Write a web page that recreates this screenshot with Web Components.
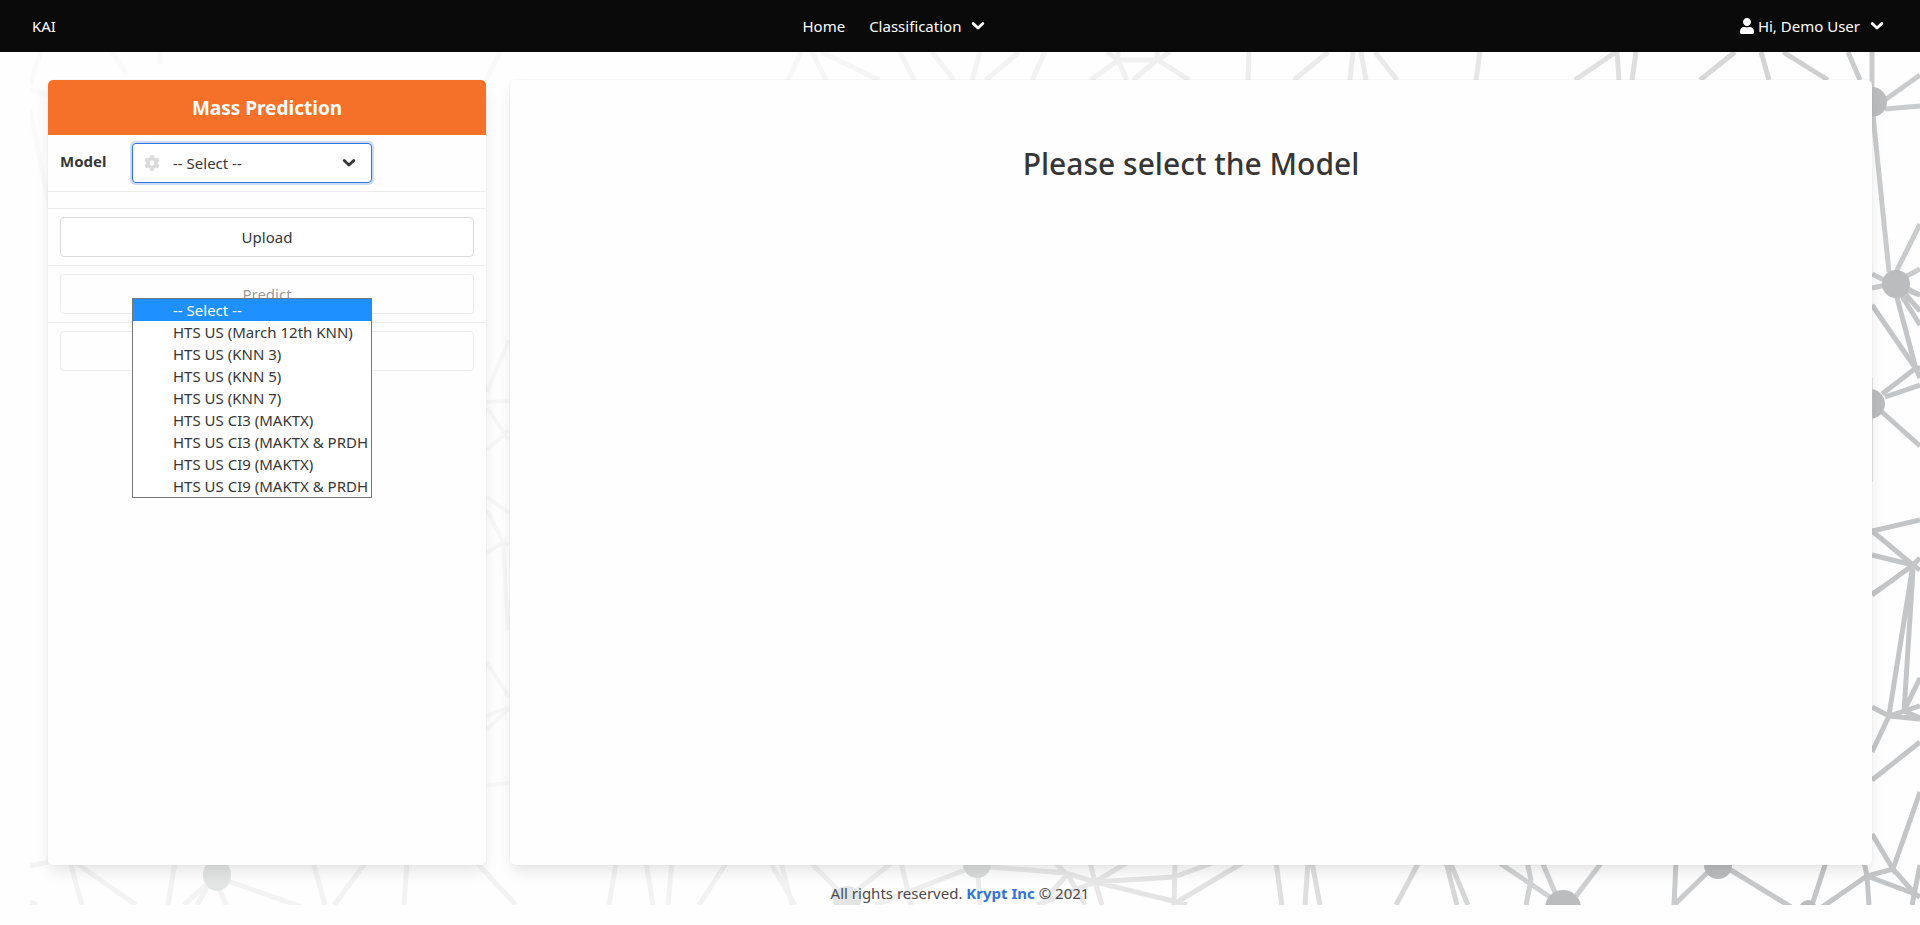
<!DOCTYPE html>
<html lang="en">
<head>
<meta charset="utf-8">
<meta name="viewport" content="width=device-width, initial-scale=1">
<title>KAI - Mass Prediction</title>
<style>
  html, body { margin: 0; min-height: 100%; background: #fefefe; }
  body { font: 15px/24px "Noto Sans", "Open Sans", sans-serif; color: #363636; }
</style>
</head>
<body>
<kai-app></kai-app>

<script>
const define = (name, html, setup) => {
  const tpl = document.createElement('template');
  tpl.innerHTML = html;
  customElements.define(name, class extends HTMLElement {
    constructor() {
      super();
      this.attachShadow({ mode: 'open' }).append(tpl.content.cloneNode(true));
    }
    connectedCallback() { if (setup) setup(this, this.shadowRoot); }
  });
};

/* Icons */
define('kai-chevron', `
  <style>:host { display: block; width: 14px; height: 10px; } svg { display: block; }</style>
  <svg width="14" height="10" viewBox="0 0 14 10" fill="none" stroke="currentColor" stroke-width="2.800" stroke-linecap="round" stroke-linejoin="round" aria-hidden="true"><path d="M2.200 2.400 7 7.100l4.800-4.700"/></svg>`);

define('kai-user-icon', `
  <style>:host { display: block; width: 14px; height: 16px; } svg { display: block; }</style>
  <svg width="14" height="16" viewBox="0 0 448 512" fill="currentColor" aria-hidden="true"><path d="M224 256c70.700 0 128-57.300 128-128S294.700 0 224 0 96 57.300 96 128s57.300 128 128 128zm89.600 32h-16.700c-22.200 10.200-46.900 16-72.900 16s-50.600-5.800-72.900-16h-16.700C60.200 288 0 348.200 0 422.400V464c0 26.500 21.500 48 48 48h352c26.500 0 48-21.500 48-48v-41.600c0-74.200-60.200-134.400-134.400-134.400z"/></svg>`);

define('kai-gear-icon', `
  <style>:host { display: block; width: 16px; height: 16px; } svg { display: block; }</style>
  <svg width="16" height="16" viewBox="0 0 512 512" fill="currentColor" aria-hidden="true"><path d="M487.400 315.700l-42.600-24.600c4.300-23.200 4.300-47 0-70.200l42.600-24.600c4.900-2.800 7.100-8.600 5.500-14-11.100-35.600-30-67.800-54.700-94.600-3.800-4.100-10-5.100-14.800-2.300L380.800 110c-17.900-15.400-38.500-27.300-60.800-35.100V25.800c0-5.600-3.900-10.500-9.400-11.700-36.700-8.200-74.300-7.800-109.200 0-5.500 1.200-9.400 6.100-9.400 11.700V75c-22.200 7.900-42.800 19.800-60.800 35.100L88.700 85.500c-4.900-2.800-11-1.900-14.800 2.300-24.700 26.700-43.600 58.900-54.700 94.600-1.700 5.400.6 11.200 5.500 14L67.300 221c-4.300 23.200-4.300 47 0 70.200l-42.600 24.600c-4.900 2.800-7.100 8.600-5.500 14 11.100 35.600 30 67.800 54.700 94.600 3.800 4.100 10 5.100 14.800 2.300l42.600-24.600c17.900 15.400 38.500 27.300 60.800 35.100v49.200c0 5.600 3.900 10.500 9.400 11.700 36.700 8.200 74.300 7.800 109.200 0 5.500-1.200 9.400-6.100 9.400-11.700v-49.200c22.200-7.900 42.800-19.800 60.800-35.100l42.600 24.600c4.900 2.800 11 1.900 14.800-2.300 24.700-26.700 43.600-58.900 54.700-94.600 1.500-5.500-.7-11.300-5.600-14.100zM256 336c-44.100 0-80-35.900-80-80s35.900-80 80-80 80 35.900 80 80-35.900 80-80 80z"/></svg>`);

/* Decorative network behind the cards */
define('kai-network', `
  <style>:host { display: block; } svg { display: block; width: 100%; height: 100%; }</style>
  <svg viewBox="30 52 1890 853" preserveAspectRatio="none" fill="none" aria-hidden="true">
    <defs>
      <linearGradient id="top" gradientUnits="userSpaceOnUse" x1="30" y1="0" x2="1920" y2="0">
        <stop offset="0" stop-color="#fafafa"/><stop offset=".35" stop-color="#f8f8f8"/><stop offset=".57" stop-color="#f1f1f1"/>
        <stop offset=".75" stop-color="#e8e8e8"/><stop offset=".84" stop-color="#dfdfdf"/><stop offset=".91" stop-color="#d5d5d6"/><stop offset=".97" stop-color="#cacbcc"/>
      </linearGradient>
      <linearGradient id="low" gradientUnits="userSpaceOnUse" x1="30" y1="0" x2="1920" y2="0">
        <stop offset="0" stop-color="#f3f3f3"/><stop offset=".4" stop-color="#f2f2f2"/><stop offset=".55" stop-color="#e8e8e8"/>
        <stop offset=".68" stop-color="#dedede"/><stop offset=".8" stop-color="#d0d1d2"/><stop offset=".95" stop-color="#c4c5c7"/>
      </linearGradient>
    </defs>
    <path stroke="url(#top)" stroke-width="5" d="M41 52 30 85M30 90l18 5M30 110l18 90M112 52l15 23M500 52l-14 28M160 52v12
      M801 52 788 80M812 52l14 28M821 52l58 28M900 52l14 28M932 52l22 28M980 52l-8 28M1019 52l-33 28M1045 52l-13 28
      M1107 52l11 8-27 20M1118 52v8l9 20M1118 60h40M1157 52v8l-24 20M1170 52l-12 8 31 20
      M1249 52l-1 28M1328 52l-34 28M1353 52l-3 28M1361 52l5 28M1375 52l22 28M1480 52l-4 28M1616 52l-41 28M1617 52l2 28M1636 52l-4 28
      M1735 52l-35 28M1761 52l8 28M1783 52l45 28M1848 52l12 28M1872 52v38M1885 100l35-25M1885 109l35-3M1873 115l16 157
      M1896 272l24-48M1905 277l15-8M1905 290l15 5M1872 274l16 8M1872 288l14-3"/>
    <path stroke="url(#low)" stroke-width="5" d="M1895 290l21 79M1872 305l44 64M1900 293l20 32M1902 290l18 21M1904 287l16 8M1920 368h-4l-34 26M1916 369l4 9M1885 397l35-12M1882 412l38 34
      M1920 520l-48 11 41 34-41-10M1872 595l41-30 7-7M1913 565l7 5M1913 565l-24 150M1913 570l-9 142M1893 580l-21 14
      M1872 707l17 9 15-5 16-5M1904 711l16-33M1889 716l31 3M1904 711l16 7M1889 716l-17 36M1920 742l-48 38M1920 792l-27 77-21-35
      M1893 869l-26 7-55 38M1864 862l3 14 2 29M1867 876l48 18-22-25M1920 865l-8 40M1915 894l5 3"/>
    <path stroke="#f7f7f7" stroke-width="4" d="M487 392l22-52M487 402l22-1M487 408l22 32M487 450l22-20M487 497l22 16M487 510l16 32 6 3M487 553l16-11 5 88M487 663l22 34M487 716l22-9M487 729l22-20M487 785l22-2"/>
    <path stroke="url(#low)" stroke-width="5" d="M30 866l18-4M70 862l12 43M76 863l60 42M175 862l-7 43M207 884l-23 21M208 886l-11 19M219 888l7 17M228 881l74 26M313 862l12 43M366 862l-32 43M407 862l-3 43M476 862l40 43M616 862l-7 43M30 902l7 3
      M646 862l7 43M672 862l-4 43M727 862l-28 43M770 862l25 43M781 862l11 43M810 862l28 28M893 862l-41 32M901 862l10 43M965 870l-90 35M978 875l2 30M990 867l76 6 29 9M1055 862l12 13-27 30M1068 875l17 30
      M1128 862l-33 20-58 23M1090 862l5 20 7 23M1215 862l-41 15-79 5 82 20M1175 862l-1 43M1244 862l-67 40 10 3M1276 862l6 43
      M1308 862l-3 43M1312 862l8 43M1419 862l-23 43M1446 862l11 43M1450 862l18 43M1498 862l52 35M1527 862l4 18-5 25M1542 862l15 35M1602 862l-26 34M1676 862l-2 43 34-33M1729 869l62 38M1826 862l-14 43"/>
    <g fill="#bbbcbe">
      <circle cx="1872" cy="102" r="15"/><circle cx="1896" cy="284" r="14"/><circle cx="1870" cy="404" r="15"/>
      <circle cx="1563" cy="908" r="18"/><circle cx="1718" cy="865" r="14"/><circle cx="1808" cy="909" r="9"/>
    </g>
    <g fill="#e2e5e4"><ellipse cx="217" cy="875" rx="14" ry="16"/><circle cx="847" cy="900" r="14"/><circle cx="977" cy="864" r="14" fill="#d9dcdb"/></g>
    <path stroke="#c9c9c9" stroke-width="1" d="M1872 378v104"/>
  </svg>`);

/* Top bar */
define('kai-navbar', `
  <style>
    :host { display: block; background: #0a0a0a; color: #fff; }
    nav { display: flex; justify-content: space-between; align-items: center; height: 52px; padding: 0 20px; }
    .menu { display: flex; align-items: center; padding-right: 8px; }
    a, button { display: flex; align-items: center; height: 52px; padding: 0 12px; border: 0; background: none; color: inherit; font: inherit; text-decoration: none; cursor: pointer; }
    kai-chevron { margin-left: 10px; }
    kai-user-icon { margin-right: 4px; }
    .user { padding-right: 16px; }
  </style>
  <nav aria-label="Main">
    <a href="#kai">KAI</a>
    <div class="menu"><a href="#home">Home</a><button type="button">Classification<kai-chevron></kai-chevron></button></div>
    <button class="user" type="button"><kai-user-icon></kai-user-icon>Hi, Demo User<kai-chevron></kai-chevron></button>
  </nav>`);

/* White rounded card */
define('kai-card', `
  <style>
    :host { display: block; box-sizing: border-box; min-height: calc(100vh - 140px); border-radius: 5px; background: #fefefe;
      box-shadow: 0 8px 16px -2px rgba(10,10,10,.1), 0 0 0 1px rgba(10,10,10,.02); }
  </style>
  <slot></slot>`);

define('kai-row', `
  <style>:host { display: flex; align-items: center; padding: 8px 12px; border-bottom: 1px solid #ededed; } :host(:last-of-type) { border-bottom: 0; }</style>
  <slot></slot>`);

define('kai-action', `
  <style>
    :host { display: block; flex: 1; }
    button { display: block; width: 100%; height: 40px; border: 1px solid #dbdbdb; border-radius: 4px; background: #fff; color: #363636; font: inherit; cursor: pointer; }
    button:disabled { opacity: .5; cursor: not-allowed; }
  </style>
  <button type="button"><slot></slot></button>`,
  (el, root) => { root.querySelector('button').disabled = el.hasAttribute('disabled'); });

/* Labelled model picker with its open list */
define('kai-model-picker', `
  <style>
    :host { display: flex; align-items: center; }
    label { width: 72px; padding-bottom: 4px; font-weight: 700; }
    .field { position: relative; width: 240px; }
    select { display: block; appearance: none; box-sizing: border-box; width: 100%; height: 40px; padding: 0 40px; border: 1px solid #3273dc; border-radius: 4px;
      background: #fff; color: #363636; font: inherit; outline: 0; box-shadow: 0 0 0 2px rgba(50,115,220,.25); }
    kai-gear-icon { position: absolute; left: 12px; top: 12px; color: #dbdbdb; }
    kai-chevron { position: absolute; right: 16px; top: 15px; pointer-events: none; }
    ul { position: absolute; z-index: 1; top: 155px; left: 0; box-sizing: border-box; width: 100%; margin: 0; padding: 0; overflow: hidden;
      border: 1px solid #767676; background: #fff; list-style: none; }
    li { height: 22px; padding-left: 40px; line-height: 22px; white-space: nowrap; }
    li[aria-selected=true] { background: #1e90ff; color: #fff; }
  </style>
  <label for="model">Model</label>
  <div class="field">
    <select id="model"></select>
    <kai-gear-icon></kai-gear-icon>
    <kai-chevron></kai-chevron>
    <ul role="listbox" aria-label="Model"></ul>
  </div>`,
  (el, root) => {
    const names = ['-- Select --', 'HTS US (March 12th KNN)', 'HTS US (KNN 3)', 'HTS US (KNN 5)', 'HTS US (KNN 7)',
      'HTS US CI3 (MAKTX)', 'HTS US CI3 (MAKTX & PRDH', 'HTS US CI9 (MAKTX)', 'HTS US CI9 (MAKTX & PRDH'];
    const select = root.querySelector('select'), list = root.querySelector('ul');
    names.forEach((name, i) => {
      select.add(new Option(name));
      const li = document.createElement('li');
      li.setAttribute('role', 'option');
      li.setAttribute('aria-selected', i === 0);
      li.textContent = name;
      list.append(li);
    });
  });

define('kai-footer', `
  <style>
    :host { display: block; text-align: center; color: #4a4a4a; }
    p { margin: 0; }
    a { color: #3273dc; font-weight: 700; text-decoration: none; }
  </style>
  <p>All rights reserved. <a href="#krypt">Krypt Inc</a> © 2021</p>`);

define('kai-app', `
  <style>
    :host { display: block; }
    .stage { position: relative; padding: 28px 48px 0; }
    kai-network { position: absolute; inset: 0 0 0 30px; }
    main { position: relative; display: flex; gap: 24px; }
    .side { flex: 0 0 calc(25% - 18px); }
    .content { flex: 1; }
    h1, h2 { margin: 0; text-align: center; }
    h1 { padding: 14px 12px 13px; border-radius: 5px 5px 0 0; background: #f57029; color: #fff; font-size: 19px; line-height: 28px; font-weight: 700; }
    h2 { padding-top: 64px; font-size: 30px; line-height: 40px; font-weight: 500; }
    kai-footer { position: relative; padding: 16px 0 0; }
  </style>
  <kai-navbar></kai-navbar>
  <div class="stage">
    <kai-network></kai-network>
    <main>
      <kai-card class="side">
        <h1>Mass Prediction</h1>
        <kai-row><kai-model-picker></kai-model-picker></kai-row>
        <kai-row></kai-row>
        <kai-row><kai-action>Upload</kai-action></kai-row>
        <kai-row><kai-action disabled>Predict</kai-action></kai-row>
        <kai-row><kai-action disabled></kai-action></kai-row>
      </kai-card>
      <kai-card class="content"><h2>Please select the Model</h2></kai-card>
    </main>
    <kai-footer></kai-footer>
  </div>`);
</script>
</body>
</html>
